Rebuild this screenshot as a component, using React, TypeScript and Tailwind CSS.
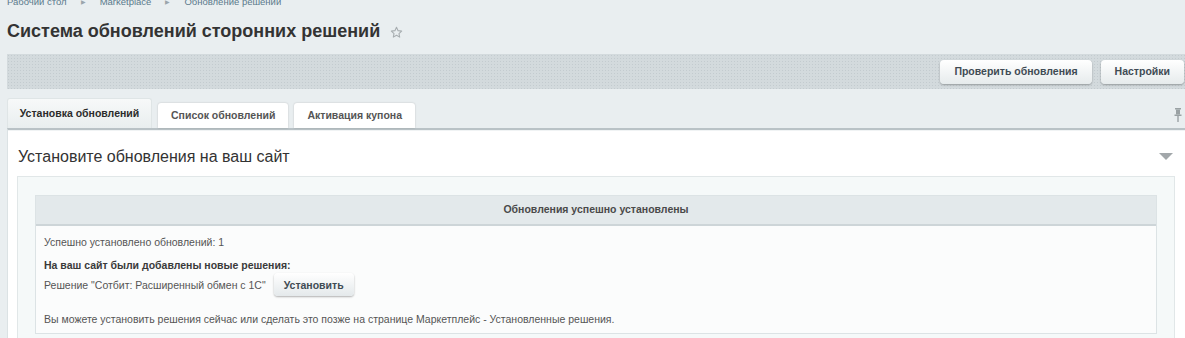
const font = "font-['Liberation_Sans',Arial,sans-serif]";

function Star() {
  return (
    <svg width="13" height="13" viewBox="0 0 24 24" className="ml-[10px] mt-[2px]">
      <path
        d="M12 2.5l2.9 6.1 6.6.8-4.9 4.5 1.3 6.6L12 17.2l-5.9 3.3 1.3-6.6-4.9-4.5 6.6-.8z"
        fill="none"
        stroke="#a7adb0"
        strokeWidth="2"
        strokeLinejoin="round"
      />
    </svg>
  );
}

function Pin() {
  return (
    <svg width="8" height="14" viewBox="0 0 8 14">
      <rect x="1" y="0" width="6" height="1.5" fill="#9aa1a4" />
      <rect x="2" y="1.5" width="4" height="5" fill="#9aa1a4" />
      <rect x="0.5" y="6.5" width="7" height="1.5" fill="#9aa1a4" />
      <rect x="3.3" y="8" width="1.4" height="6" fill="#9aa1a4" />
    </svg>
  );
}

function ToolbarButton({ label }: { label: string }) {
  return (
    <button className="h-[24px] px-[14px] rounded-[4px] bg-[linear-gradient(#ffffff,#e6ebec)] shadow-[0_1px_2px_rgba(0,0,0,0.3)] text-[10.5px] font-bold text-[#3f4b54]">
      {label}
    </button>
  );
}

function Tab({ label, active }: { label: string; active?: boolean }) {
  if (active) {
    return (
      <div className="h-[30px] w-[145px] flex items-center justify-center rounded-t-[3px] bg-[linear-gradient(#f7f9f9,#e9eeef)] border border-b-0 border-[#dfe5e6] text-[10.5px] font-bold text-[#2b2b2b]">
        {label}
      </div>
    );
  }
  return (
    <div className="h-[25px] flex items-center px-[13px] rounded-t-[3px] bg-white shadow-[0_0_2px_rgba(0,0,0,0.2)] text-[10.5px] font-bold text-[#555]">
      {label}
    </div>
  );
}

export default function App() {
  return (
    <div className={`${font} bg-[#e9eef0] w-[1185px] h-[338px] overflow-hidden pl-[7px]`}>
      {/* breadcrumbs */}
      <div className="h-[10px] -mt-[3px] flex items-center gap-[14px] text-[9.5px] text-[#5b7a8c] leading-none">
        <span>Рабочий стол</span>
        <span className="text-[#9aa5ab] text-[6px]">▶</span>
        <span>Marketplace</span>
        <span className="text-[#9aa5ab] text-[6px]">▶</span>
        <span>Обновление решений</span>
      </div>

      <div className="flex items-center h-[22px] mt-[13px]">
        <h1 className="text-[18px] font-bold text-[#333] leading-none">Система обновлений сторонних решений</h1>
        <Star />
      </div>

      {/* toolbar */}
      <div className="mt-[12px] h-[35px] flex items-center justify-end gap-[9px] pr-[1px] bg-[#d3dadd] bg-[radial-gradient(#c3cbcf_0.8px,transparent_0.8px)] bg-[length:3px_3px]">
        <ToolbarButton label="Проверить обновления" />
        <ToolbarButton label="Настройки" />
      </div>

      {/* tabs */}
      <div className="mt-[9px] flex items-end gap-[6px] h-[30px]">
        <Tab label="Установка обновлений" active />
        <Tab label="Список обновлений" />
        <Tab label="Активация купона" />
        <div className="ml-auto self-center pr-[3px] pt-[4px]">
          <Pin />
        </div>
      </div>

      {/* content panel */}
      <div className="bg-white border-t-[2px] border-[#b9c2c6] border-l border-l-[#dbe2e4]">
        <div className="h-[46px] pt-[6px] flex items-center justify-between pl-[10px] pr-[12px] border-t border-[#f0f3f4]">
          <h2 className="text-[16px] text-[#333] font-normal">Установите обновления на ваш сайт</h2>
          <div className="w-0 h-0 border-l-[7px] border-r-[7px] border-t-[7px] border-l-transparent border-r-transparent border-t-[#a2a7aa]" />
        </div>

        <div className="ml-[9px] mr-[10px] bg-[#f5f9f9] border border-[#e1e7e8] pt-[18px] px-[17px] pb-[8px]">
          <div className="border border-[#dce3e5] bg-[#fbfcfc]">
            <div className="h-[30px] flex items-center justify-center bg-[#e3e9eb] border-b-[2px] border-[#cdd5d8] text-[10.5px] text-[#4a4a4a] font-bold">
              Обновления успешно установлены
            </div>
            <div className="px-[8px] pt-[9px] pb-[7px] text-[10.5px] text-[#555] leading-[14px]">
              <div>Успешно установлено обновлений: 1</div>
              <div className="mt-[9px] font-bold text-[#3a3a3a]">На ваш сайт были добавлены новые решения:</div>
              <div className="mt-[1px] flex items-center gap-[8px]">
                <span>Решение "Сотбит: Расширенный обмен с 1С"</span>
                <button className="h-[23px] px-[10px] rounded-[4px] bg-[linear-gradient(#ffffff,#e4e9eb)] shadow-[0_1px_2px_rgba(0,0,0,0.3)] text-[10.5px] font-bold text-[#3f4b54]">
                  Установить
                </button>
              </div>
              <div className="mt-[16px]">
                Вы можете установить решения сейчас или сделать это позже на странице Маркетплейс - Установленные решения.
              </div>
            </div>
          </div>
        </div>
      </div>
    </div>
  );
}
